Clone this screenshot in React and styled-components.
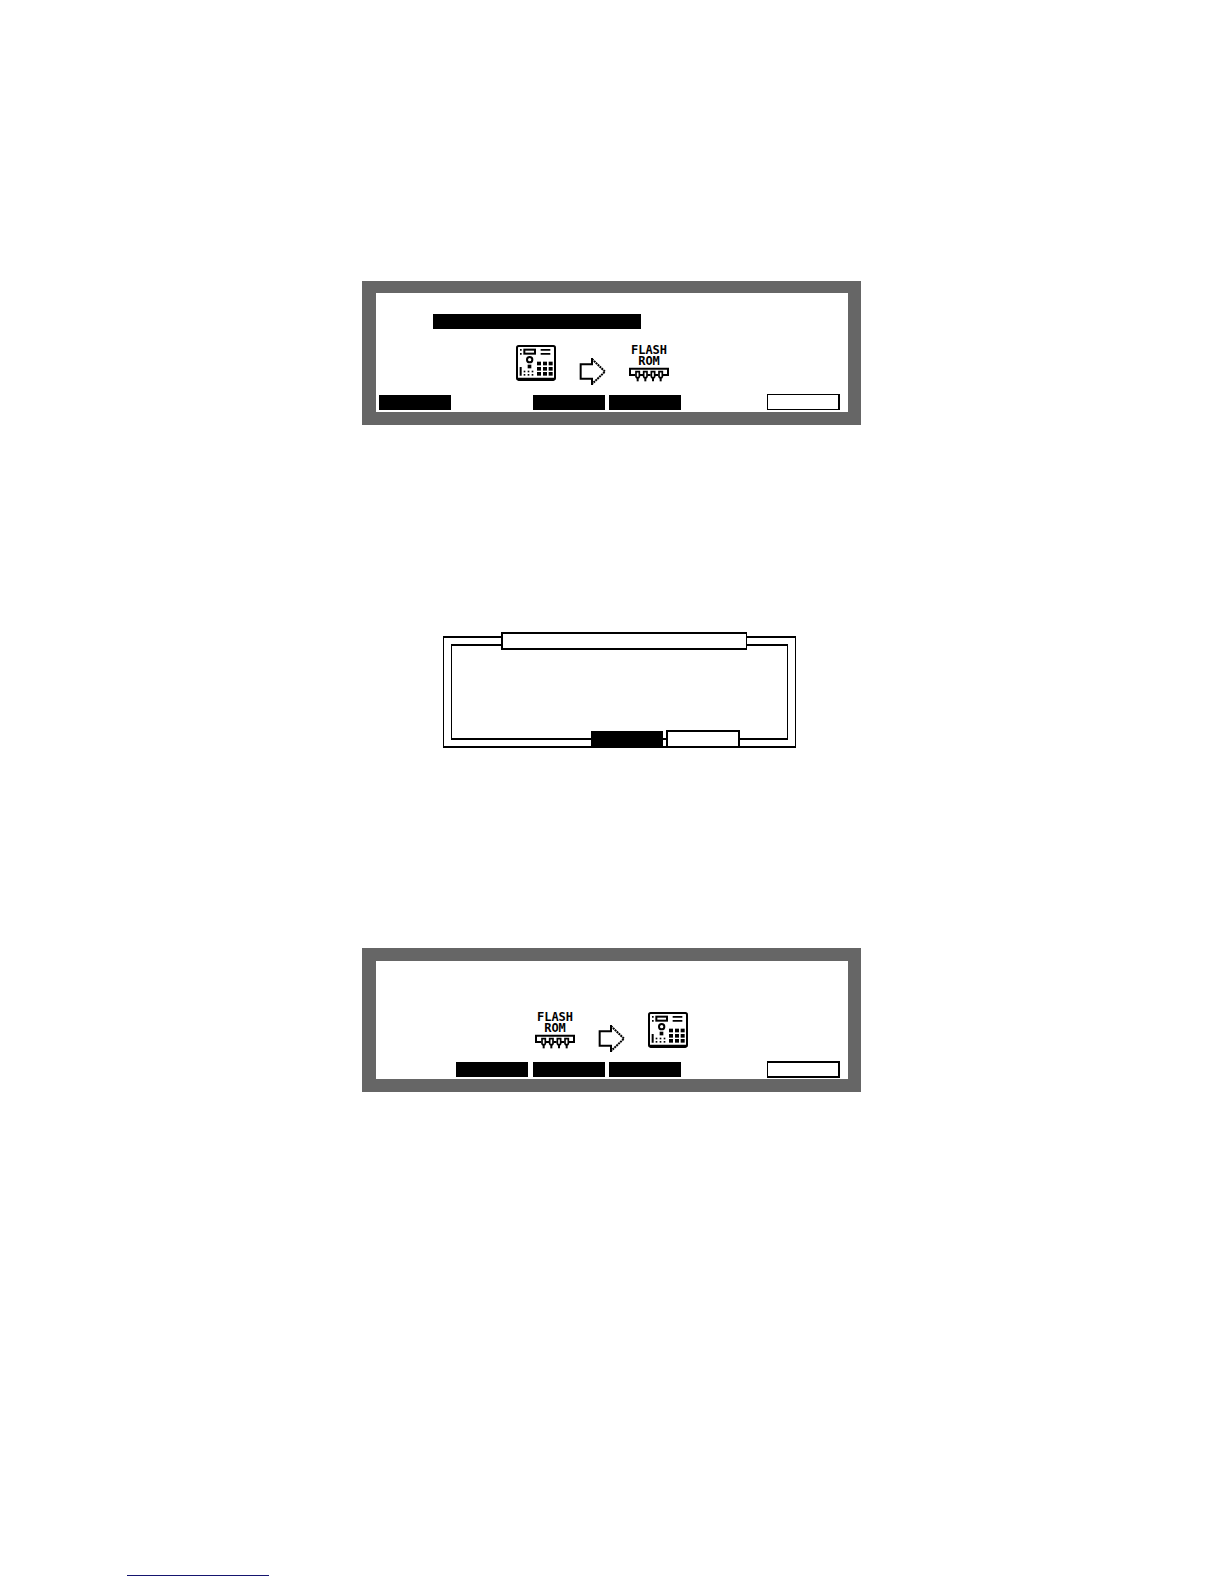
import React from 'react';
import styled, { createGlobalStyle } from 'styled-components';

const GlobalStyle = createGlobalStyle`
  * {
    box-sizing: border-box;
  }
  body {
    margin: 0;
    background: #ffffff;
  }
`;

const Page = styled.main`
  display: flex;
  flex-direction: column;
  padding: 281px 128px 8px 127px;
`;

const Column = styled.div`
  display: flex;
  flex-direction: column;
  width: 100%;
  max-width: 499px;
  margin: 0 auto;
`;

const Screen = styled.section`
  display: flex;
  flex-direction: column;
  height: 144px;
  background: #ffffff;
  border: solid #666666;
  border-width: ${(props) => (props.$lower ? '13px 13px 13px 14px' : '12px 13px 13px 14px')};
`;

const Field = styled.div`
  width: 208px;
  height: 15px;
  margin: 21px 0 16px 57px;
  background: #000000;
`;

const Transfer = styled.div`
  display: flex;
  align-items: flex-start;
  gap: 23px;
  height: 40px;
  margin-top: ${(props) => props.$top || 0}px;
  padding-left: ${(props) => props.$indent}px;
`;

const Drawing = styled.svg`
  display: block;
  flex: none;
`;

const Arrow = styled(Drawing)`
  align-self: flex-end;
`;

const Rom = styled.div`
  display: flex;
  flex-direction: column;
  align-items: center;
  width: 40px;
`;

const RomLabel = styled.div`
  font-family: 'DejaVu Sans Mono', monospace;
  font-size: 12px;
  font-weight: bold;
  line-height: 11px;
  text-align: center;
  color: #000000;
`;

const SoftKeys = styled.div`
  display: grid;
  grid-template-columns: 73px 73px 72px 72px 1fr;
  column-gap: 4px;
  align-items: center;
  height: 17px;
  margin-top: auto;
  margin-bottom: 1px;
  padding: 0 8px 0 3px;
`;

const Key = styled.button`
  grid-column: ${(props) => props.$slot || 'auto'};
  width: 72px;
  height: 15px;
  padding: 0;
  border: none;
  background: #000000;
`;

const OutlineKey = styled(Key)`
  align-self: start;
  justify-self: end;
  width: 73px;
  height: ${(props) => (props.$heavy ? 17 : 16)}px;
  background: #ffffff;
  border: solid #000000;
  border-width: ${(props) => (props.$heavy ? '2px 2px 2px 1px' : '1px 2px 1px 1px')};
`;

const Dialog = styled.section`
  position: relative;
  width: 353px;
  height: 112px;
  margin: 211px 0 200px 81px;
  padding: 6px 7px;
  border: solid #000000;
  border-width: 2px 1px;
`;

const DialogBody = styled.div`
  height: 100%;
  border: solid #000000;
  border-width: 2px 1px;
`;

const DialogTitle = styled.div`
  position: absolute;
  top: -6px;
  left: 57px;
  width: 246px;
  height: 18px;
  background: #ffffff;
  border: solid #000000;
  border-width: 2px 1px 2px 2px;
`;

const DialogKeys = styled.div`
  position: absolute;
  right: 55px;
  bottom: -2px;
  display: flex;
  align-items: flex-end;
  gap: 3px;
`;

const DialogKey = styled(Key)`
  width: ${(props) => (props.$outline ? 74 : 72)}px;
  height: ${(props) => (props.$outline ? 18 : 17)}px;
  background: ${(props) => (props.$outline ? '#ffffff' : '#000000')};
  border: ${(props) => (props.$outline ? '2px solid #000000' : 'none')};
`;

const FooterLink = styled.a`
  width: 142px;
  height: 16px;
  margin-top: 468px;
  border-bottom: 1px solid #15156f;
`;

const PAD_X = [63, 81, 98];
const PAD_Y = [50, 66, 81];
const DOT_X = [23, 35, 47];
const DOT_Y = [77, 87];
const PINS = [19, 42, 65, 88];

const SamplerIcon = () => (
  <Drawing width="40" height="36" viewBox="0 0 120 108" aria-hidden="true">
    <rect x="3" y="3" width="114" height="101" rx="5" fill="none" stroke="#000" strokeWidth="6" />
    <path d="M3 98H117V103L112 108H8L3 103Z" />
    <path d="M12 12h5v5h-5zM12 24h5v5h-5zM11 66h6v26h-6zM74 12h29v5H74zM74 24h29v5H74z" />
    <rect x="25" y="14" width="32" height="12" fill="none" stroke="#000" strokeWidth="6" />
    <circle cx="41" cy="44" r="8" fill="none" stroke="#000" strokeWidth="6" />
    <rect x="35" y="59" width="11" height="11" />
    {PAD_Y.map((y) => PAD_X.map((x) => <rect key={`${x}-${y}`} x={x} y={y} width="12" height="11" />))}
    {DOT_Y.map((y) => DOT_X.map((x) => <rect key={`${x}-${y}`} x={x} y={y} width="5" height="5" />))}
  </Drawing>
);

const ArrowIcon = () => (
  <Arrow width="27" height="27" viewBox="0 0 81 81" aria-hidden="true">
    <path d="M39 0V19H5V62H39V81" fill="none" stroke="#000" strokeWidth="6" />
    <path d="M39 3L78 41L39 78" fill="none" stroke="#000" strokeWidth="6" strokeDasharray="6 2" />
  </Arrow>
);

const RomIcon = () => (
  <Rom>
    <RomLabel>
      FLASH
      <br />
      ROM
    </RomLabel>
    <Drawing width="40" height="15" viewBox="0 0 120 45" aria-hidden="true">
      <path d="M19 24H3V5H117V24H101" fill="none" stroke="#000" strokeWidth="6" />
      {PINS.map((x) => (
        <g key={x}>
          <path d={`M${x + 2} 14h10v15l-2 3h-6l-2 -3z`} fill="none" stroke="#000" strokeWidth="5" />
          <path d={`M${x + 4} 32h6v11h-6z`} />
        </g>
      ))}
      <path d="M32 21h10v6h-10zM55 21h10v6h-10zM78 21h10v6h-10z" />
    </Drawing>
  </Rom>
);

const App = () => {
  return (
    <Page>
      <GlobalStyle />
      <Column>
        <Screen>
          <Field />
          <Transfer $indent={140}>
            <SamplerIcon />
            <ArrowIcon />
            <RomIcon />
          </Transfer>
          <SoftKeys>
            <Key type="button" aria-label="F1" $slot={1} />
            <Key type="button" aria-label="F3" $slot={3} />
            <Key type="button" aria-label="F4" $slot={4} />
            <OutlineKey type="button" aria-label="F6" $slot={5} />
          </SoftKeys>
        </Screen>
        <Dialog>
          <DialogBody />
          <DialogTitle />
          <DialogKeys>
            <DialogKey type="button" aria-label="F4" />
            <DialogKey type="button" aria-label="F5" $outline />
          </DialogKeys>
        </Dialog>
        <Screen $lower>
          <Transfer $indent={159} $top={51}>
            <RomIcon />
            <ArrowIcon />
            <SamplerIcon />
          </Transfer>
          <SoftKeys>
            <Key type="button" aria-label="F2" $slot={2} />
            <Key type="button" aria-label="F3" $slot={3} />
            <Key type="button" aria-label="F4" $slot={4} />
            <OutlineKey type="button" aria-label="F6" $slot={5} $heavy />
          </SoftKeys>
        </Screen>
      </Column>
      <FooterLink href="#top" aria-label="Top of page" />
    </Page>
  );
};

export default App;
